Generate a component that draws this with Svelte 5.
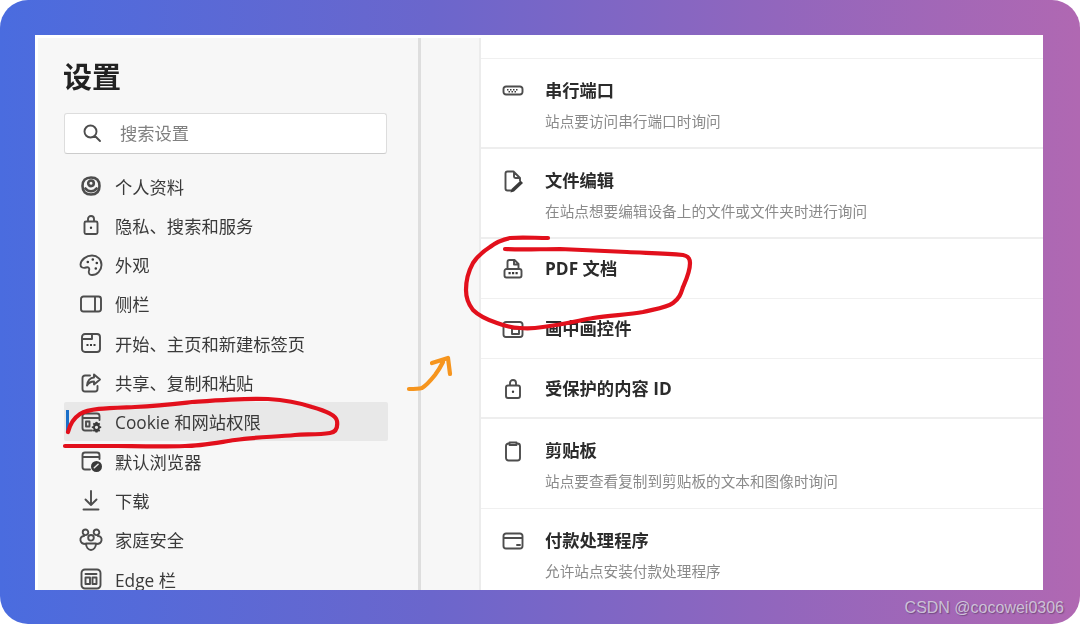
<script>
	const navItems = [
		{ label: '个人资料', s: 'M12 3.5c5.5 0 8.5 3 8.5 8.5s-3 8.5-8.5 8.5-8.5-3-8.500-8.500 3-8.500 8.500-8.500zM12 6.500a2.800 2.800 0 1 0 0 5.600 2.800 2.800 0 0 0 0-5.600zM6.500 14.500c3 3.600 8 3.600 11 0', w: 2.6 },
		{ label: '隐私、搜索和服务', s: 'M7 8.500h10a1.500 1.500 0 0 1 1.500 1.500v9.500a1.500 1.500 0 0 1-1.500 1.500h-10a1.500 1.500 0 0 1-1.500-1.500v-9.500a1.500 1.500 0 0 1 1.500-1.500zM9 8.500v-2.500a3 3 0 0 1 6 0v2.500', f: 'M10.800 14.700a1.200 1.200 0 1 0 2.400 0 1.200 1.200 0 0 0-2.400 0z' },
		{ label: '外观', s: 'M13 2.500c-5.500 0-11 4-11.500 9-.3 3 3 4 5.500 3 2.500-1 4 1 3 3-1 2.500.5 4.500 3 4.500 5 0 9.500-4.500 9.500-10 0-5.500-4-9.500-9.500-9.500z', f: 'M7.500 9a1.300 1.300 0 1 0 2.600 0 1.300 1.300 0 0 0-2.600 0zM12.500 6.500a1.300 1.300 0 1 0 2.600 0 1.300 1.300 0 0 0-2.600 0zM16.500 10a1.300 1.300 0 1 0 2.600 0 1.300 1.300 0 0 0-2.600 0zM15.500 15.500a1.300 1.300 0 1 0 2.600 0 1.300 1.300 0 0 0-2.600 0z' },
		{ label: '侧栏', s: 'M4.500 4.500h15a2.500 2.500 0 0 1 2.500 2.500v10a2.500 2.500 0 0 1-2.500 2.500h-15a2.500 2.500 0 0 1-2.500-2.500v-10a2.500 2.500 0 0 1 2.500-2.500zM16 4.500v15' },
		{ label: '开始、主页和新建标签页', s: 'M6 3h12a3 3 0 0 1 3 3v12a3 3 0 0 1-3 3h-12a3 3 0 0 1-3-3v-12a3 3 0 0 1 3-3zM3 8h10v-5', f: 'M7.500 13h2v2h-2zM11 13h2v2h-2zM14.500 13h2v2h-2z' },
		{ label: '共享、复制和粘贴', s: 'M11 4.500h-5a2.500 2.500 0 0 0-2.500 2.500v11a2.500 2.500 0 0 0 2.500 2.500h10a2.500 2.500 0 0 0 2.500-2.500v-3M15 3.500l6 5-6 5v-3c-3.500 0-5.500 1.500-7 4 .2-4.500 3-8 7-8z' },
		{ label: 'Cookie 和网站权限', active: true, s: 'M13 20.500h-7a2.500 2.500 0 0 1-2.500-2.500v-12a2.500 2.500 0 0 1 2.500-2.500h12a2.500 2.500 0 0 1 2.500 2.500v4M3.500 8h17M7 11.500h3.500v5h-3.500z', f: 'M17.500 11.800l1 .2.500 1.200 1.200-.4 1 1.200-.8 1 .5 1.200 1.300.3v1.500l-1.300.3-.5 1.200.8 1-1 1.200-1.200-.4-.5 1.200h-2l-.5-1.200-1.200.4-1-1.200.8-1-.5-1.200-1.300-.3v-1.500l1.300-.3.5-1.200-.8-1 1-1.200 1.200.4.500-1.200zM17.500 15.700a1.600 1.600 0 1 0 0 3.200 1.600 1.600 0 0 0 0-3.200z' },
		{ label: '默认浏览器', s: 'M11 20.500h-5a2.500 2.500 0 0 1-2.500-2.500v-12a2.500 2.500 0 0 1 2.500-2.500h12a2.500 2.500 0 0 1 2.500 2.500v4M3.500 8h17', f: 'M17.500 12a5.500 5.500 0 1 0 0 11 5.500 5.500 0 0 0 0-11z', c: 'M15.300 18.800l3.800-3.500' },
		{ label: '下载', s: 'M12 3v14M6.500 11.500l5.500 5.500 5.500-5.500M4.500 21.500h15' },
		{ label: '家庭安全', s: 'M6.500 1.500a2.800 2.800 0 1 0 0 5.600 2.800 2.800 0 0 0 0-5.600zM17.500 1.500a2.800 2.800 0 1 0 0 5.600 2.800 2.800 0 0 0 0-5.600zM12 7a2.800 2.800 0 1 0 0 5.600 2.800 2.800 0 0 0 0-5.600zM5 8c-2.500.3-4 2-3.500 4.500.4 2 2.500 3.500 5 3.500M19 8c2.500.3 4 2 3.500 4.500-.4 2-2.500 3.500-5 3.500M7 15.500h10c0 4-2.500 6.500-5 6.500s-5-2.500-5-6.500z' },
		{ label: 'Edge 栏', s: 'M6 2.500h12a3.500 3.500 0 0 1 3.500 3.500v12a3.500 3.500 0 0 1-3.500 3.500h-12a3.500 3.500 0 0 1-3.500-3.500v-12a3.500 3.500 0 0 1 3.500-3.500zM6.500 7h11M6.500 10.500h4.500v6.500h-4.500zM13.500 10.500h4v6.500h-4z' }
	];

	const permissions = [
		{ title: '串行端口', desc: '站点要访问串行端口时询问', soft: false, s: 'M5 7.500h14a2.500 2.500 0 0 1 2.500 2.500v3a2.500 2.500 0 0 1-2.500 2.500h-14a2.500 2.500 0 0 1-2.500-2.500v-3a2.500 2.500 0 0 1 2.500-2.500z', f: 'M6 10h1.500v1.500h-1.500zM9 10h1.500v1.500h-1.500zM12 10h1.500v1.500h-1.500zM15 10h1.500v1.500h-1.500zM7.500 12h1.500v1.500h-1.500zM10.500 12h1.500v1.500h-1.500zM13.500 12h1.500v1.500h-1.500z' },
		{ title: '文件编辑', desc: '在站点想要编辑设备上的文件或文件夹时进行询问', soft: false, s: 'M10 21.500h-3.500a2 2 0 0 1-2-2v-15a2 2 0 0 1 2-2h6l6.500 6.500v2.500M13 3v4.500a1.500 1.500 0 0 0 1.500 1.500h4.500', f: 'M19.500 11.500l2.500 2.500-9 8.500-3.500 1 1-3.500z' },
		{ title: 'PDF 文档', soft: true, s: 'M6.500 12v-7a2 2 0 0 1 2-2h5l4 4v5M13 3v4.500h4.500M5.500 12h13a2 2 0 0 1 2 2v4.500a2 2 0 0 1-2 2h-13a2 2 0 0 1-2-2v-4.500a2 2 0 0 1 2-2z', f: 'M7.500 15h2.200v2.200h-2.200zM11 15h2.200v2.200h-2.200zM14.500 15h2.200v2.200h-2.200z' },
		{ title: '画中画控件', soft: true, s: 'M5 5h14a2.500 2.500 0 0 1 2.500 2.500v10a2.500 2.500 0 0 1-2.500 2.500h-14a2.500 2.500 0 0 1-2.500-2.500v-10a2.500 2.500 0 0 1 2.500-2.500zM11 11.500h7v5.500h-7z' },
		{ title: '受保护的内容 ID', soft: false, s: 'M7 8.500h10a2 2 0 0 1 2 2v8.500a2 2 0 0 1-2 2h-10a2 2 0 0 1-2-2v-8.500a2 2 0 0 1 2-2zM9 8.500v-2.500a3 3 0 0 1 6 0v2.500', f: 'M10.800 14.700a1.200 1.200 0 1 0 2.400 0 1.200 1.200 0 0 0-2.400 0z' },
		{ title: '剪贴板', desc: '站点要查看复制到剪贴板的文本和图像时询问', soft: true, s: 'M8.500 4.500h-1a2.500 2.500 0 0 0-2.500 2.500v12a2.500 2.500 0 0 0 2.500 2.500h9a2.500 2.500 0 0 0 2.500-2.500v-12a2.500 2.500 0 0 0-2.500-2.500h-1M8.500 3.500h7v2.500h-7z' },
		{ title: '付款处理程序', desc: '允许站点安装付款处理程序', soft: false, s: 'M5 4.500h14a2.500 2.500 0 0 1 2.500 2.500v10a2.500 2.500 0 0 1-2.500 2.500h-14a2.500 2.500 0 0 1-2.500-2.500v-10a2.500 2.500 0 0 1 2.500-2.500zM2.500 9h19M16 16h3' }
	];
</script>

<div class="frame">
	<div class="window">
		<aside class="sidebar">
			<h1>设置</h1>
			<div class="search">
				<svg class="icon" viewBox="0 0 24 24" width="24" height="24">
					<path d="M10.500 4.500a6 6 0 1 0 0 12 6 6 0 0 0 0-12zM15 15l5 5" />
				</svg>
				<span>搜索设置</span>
			</div>
			<nav>
				{#each navItems as item}
					<div class="nav-item" class:active={item.active}>
						<svg class="icon" viewBox="0 0 24 24" width="24" height="24">
							<path d={item.s} style={item.w ? `stroke-width: ${item.w}` : undefined} />
							{#if item.f}<path class="solid" d={item.f} />{/if}
							{#if item.c}<path class="cut" d={item.c} />{/if}
						</svg>
						<span>{item.label}</span>
					</div>
				{/each}
			</nav>
		</aside>

		<div class="gutter"></div>

		<main class="content">
			<div class="top-strip"></div>
			{#each permissions as row}
				<div class="row" class:soft={row.soft} class:single={!row.desc}>
					<svg class="icon" viewBox="0 0 24 24" width="24" height="24">
						<path d={row.s} />
						{#if row.f}<path class="solid" d={row.f} />{/if}
					</svg>
					<div class="text">
						<div class="title">{row.title}</div>
						{#if row.desc}<div class="desc">{row.desc}</div>{/if}
					</div>
				</div>
			{/each}
		</main>
	</div>

	<!-- hand drawn marks on top of the screenshot -->
	<svg class="marks" viewBox="0 0 1080 624" width="1080" height="624">
		<path class="red" d="M68 432C70 424 74 418 80 414C90 408 110 408 135 407C160 406 175 404 192 402C220 400 245 398 268 399C285 400 300 403 312 407C326 411 336 415 337 421C338 428 336 432 330 433C318 435 305 434 295 435C275 437 255 437 235 440C215 443 200 446 185 446C160 447 130 446 118 446C100 446 80 446 65 446" />
		<path class="red" d="M548 238C535 238 522 237 510 238C500 240 495 243 490 247C482 252 477 257 473 263C468 272 466 281 466 290C466 298 469 305 473 310C480 317 488 320 497 323C505 326 512 328 520 328C530 329 537 328 543 327C560 325 577 321 593 318C610 315 628 315 643 312C655 309 666 308 673 303C680 298 681 293 683 287C686 280 690 272 690 263C690 258 688 256 683 255C665 253 645 253 627 252C605 251 582 250 560 249C540 249 522 250 505 249" />
		<path class="orange" d="M409 389C414 389 418 389 422 388C427 385 431 380 435 375C438 371 441 366 443 362M432 363L448 358L450 374" />
	</svg>

	<div class="watermark">CSDN @cocowei0306</div>
</div>

<style>
	:global(body) {
		background: #fff;
		font-family: "Liberation Sans", "Noto Sans CJK SC", sans-serif;
	}

	.frame {
		position: relative;
		width: 1080px;
		height: 624px;
		box-sizing: border-box;
		padding: 35px 37px 34px 35px;
		border-radius: 28px;
		overflow: hidden;
		background: linear-gradient(90deg, #4a6cdf 0%, #6b66cc 40%, #9266bd 72%, #b068b2 100%);
	}

	.window {
		display: flex;
		height: 100%;
		padding: 3px 0 0 3px;
		box-sizing: border-box;
		overflow: hidden;
		background: #fff;
		font-family: "Open Sans", "Noto Sans CJK SC", sans-serif;
		filter: blur(0.6px);
	}

	.sidebar {
		flex: none;
		width: 383px;
		box-sizing: border-box;
		padding-left: 26px;
		background: #f7f7f7;
		border-right: 3px solid #dedede;
	}

	h1 {
		margin: 0 0 0 -1px;
		padding-top: 16px;
		height: 59px;
		box-sizing: border-box;
		font-size: 29px;
		line-height: 46px;
		font-weight: 700;
		color: #222;
	}

	.search {
		display: flex;
		align-items: center;
		gap: 16px;
		width: 323px;
		height: 41px;
		margin: 16px 0 12.400px;
		padding-left: 15px;
		padding-bottom: 2px;
		box-sizing: border-box;
		background: #fff;
		border: 1px solid #ddd;
		border-bottom-color: #ccc;
		border-radius: 3px;
		font-size: 17.300px;
		color: #808080;
	}

	.nav-item {
		position: relative;
		display: flex;
		align-items: center;
		gap: 12px;
		width: 324px;
		height: 39.300px;
		padding-left: 15px;
		box-sizing: border-box;
		font-size: 17.300px;
		color: #3a3a3a;
		white-space: nowrap;
	}

	.nav-item.active {
		background: #e8e8e8;
		border-radius: 2px;
	}

	.nav-item.active::before {
		content: "";
		position: absolute;
		left: 2px;
		top: 8px;
		width: 3px;
		height: 23px;
		background: #1a6fc9;
	}

	.gutter {
		flex: none;
		width: 60px;
		box-sizing: border-box;
		background: #f7f7f7;
		border-right: 2px solid #ececec;
	}

	.content {
		flex: 1;
		min-width: 0;
		background: #fff;
	}

	.top-strip {
		height: 20px;
		border-bottom: 1px solid #f0f0f0;
	}

	.row {
		display: flex;
		gap: 20px;
		height: 90px;
		padding: 20px 0 0 20px;
		box-sizing: border-box;
		border-bottom: 2px solid #eee;
	}

	.row.soft {
		border-bottom: 1px solid #f0f0f0;
	}

	.row.single {
		height: 60px;
		padding-top: 18px;
	}

	.title {
		font-size: 17.300px;
		line-height: 24px;
		font-weight: 700;
		color: #2b2b2b;
		white-space: nowrap;
	}

	.desc {
		margin-top: 8px;
		font-size: 14.650px;
		line-height: 20px;
		color: #8a8a8a;
		white-space: nowrap;
	}

	.icon {
		flex: none;
	}

	.icon path {
		fill: none;
		stroke: #4d4d4d;
		stroke-width: 1.900;
		stroke-linecap: round;
		stroke-linejoin: round;
	}

	.icon path.solid {
		fill: #3a3a3a;
		stroke: none;
		fill-rule: evenodd;
	}

	.icon path.cut {
		stroke: #e8e8e8;
		stroke-width: 1.500;
	}

	.marks {
		position: absolute;
		left: 0;
		top: 0;
		pointer-events: none;
	}

	.marks path {
		fill: none;
		stroke-linecap: round;
		stroke-linejoin: round;
	}

	.red {
		stroke: #e2101c;
		stroke-width: 4.200;
	}

	.orange {
		stroke: #f6951e;
		stroke-width: 4.200;
	}

	.watermark {
		position: absolute;
		right: 16px;
		top: 599px;
		font-family: "Liberation Sans", sans-serif;
		font-size: 16px;
		line-height: 18px;
		color: rgba(220, 220, 228, 0.8);
		text-shadow: 1px 1px 1px rgba(70, 50, 80, 0.5);
		white-space: nowrap;
	}
</style>
